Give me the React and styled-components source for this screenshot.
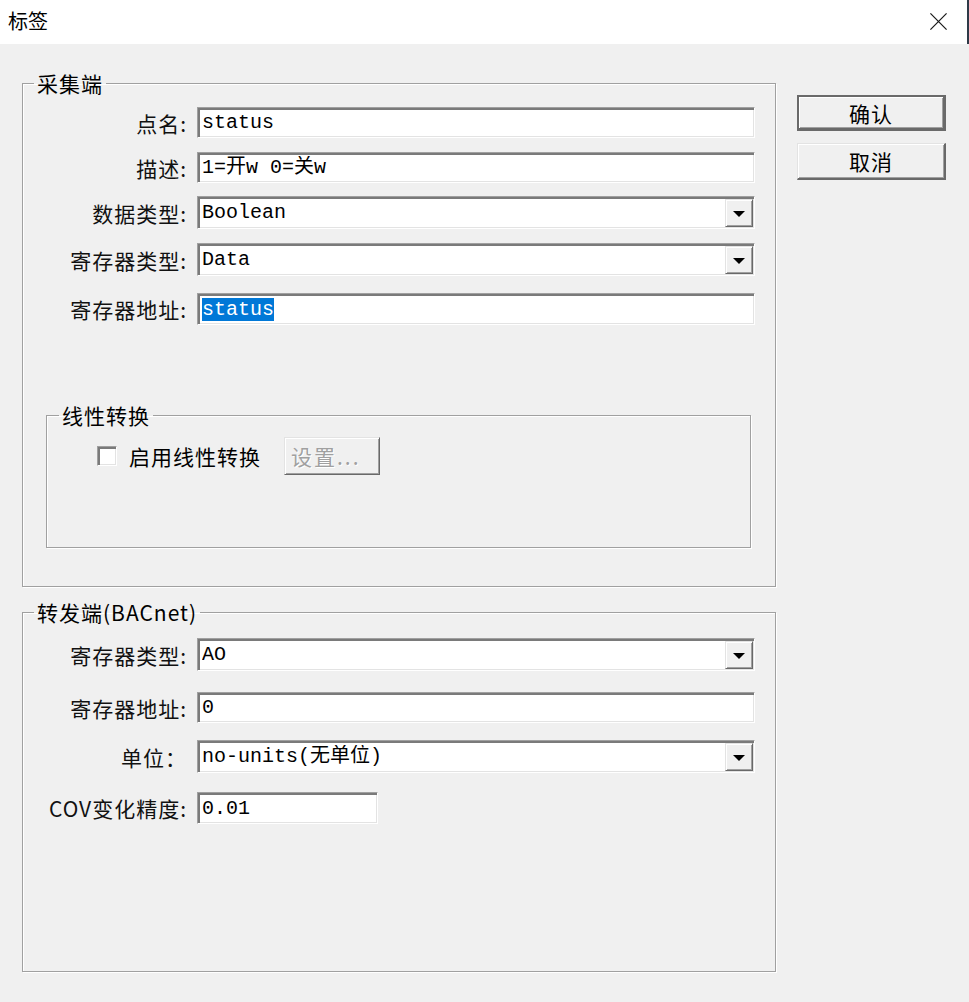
import React from 'react'
import styled, { createGlobalStyle } from 'styled-components'

const GlobalStyle = createGlobalStyle`
  html, body {
    margin: 0;
    padding: 0;
    background: #f0f0f0;
  }
  body {
    font-family: "Noto Sans CJK SC", sans-serif;
    color: #000;
  }
  * { box-sizing: border-box; }
`

const cjk = `"Noto Sans CJK SC", "Noto Sans", sans-serif`
const mono = `"Liberation Mono", "Noto Sans CJK SC", monospace`

export default function App() {
    return (
        <Window>
            <GlobalStyle />
            <TitleBar>
                <Title>标签</Title>
                <CloseIcon viewBox="0 0 20 20">
                    <path d="M1.5 1.5 L18.5 18.5 M18.5 1.5 L1.5 18.5" stroke="#1a1a1a" strokeWidth="1.3" fill="none" />
                </CloseIcon>
            </TitleBar>
            <Body>
                <LeftCol>
                    <GroupBox $mt={28}>
                        <Legend $ml={11}>采集端</Legend>
                        <GroupContent $pb={38}>
                            <Row $mt={13} $h={31}>
                                <Label>点名:</Label>
                                <Field><Value>status</Value></Field>
                            </Row>
                            <Row $mt={14} $h={31}>
                                <Label>描述:</Label>
                                <Field><Value>1=开w 0=关w</Value></Field>
                            </Row>
                            <Row $mt={13} $h={33}>
                                <Label>数据类型:</Label>
                                <Field><Value>Boolean</Value><DropButton><Arrow /></DropButton></Field>
                            </Row>
                            <Row $mt={14} $h={33}>
                                <Label>寄存器类型:</Label>
                                <Field><Value>Data</Value><DropButton><Arrow /></DropButton></Field>
                            </Row>
                            <Row $mt={17} $h={32}>
                                <Label>寄存器地址:</Label>
                                <Field><Value><Selected>status</Selected></Value></Field>
                            </Row>

                            <InnerGroup>
                                <Legend $ml={12}>线性转换</Legend>
                                <CheckRow>
                                    <CheckBox />
                                    <CheckText>启用线性转换</CheckText>
                                    <SetupButton>设置...</SetupButton>
                                </CheckRow>
                            </InnerGroup>
                        </GroupContent>
                    </GroupBox>

                    <GroupBox $mt={14}>
                        <Legend $ml={11}>转发端(BACnet)</Legend>
                        <GroupContent $pb={147}>
                            <Row $mt={15} $h={33}>
                                <Label>寄存器类型:</Label>
                                <Field><Value>AO</Value><DropButton><Arrow /></DropButton></Field>
                            </Row>
                            <Row $mt={21} $h={31}>
                                <Label>寄存器地址:</Label>
                                <Field><Value>0</Value></Field>
                            </Row>
                            <Row $mt={17} $h={33}>
                                <Label>单位：</Label>
                                <Field><Value>no-units(无单位)</Value><DropButton><Arrow /></DropButton></Field>
                            </Row>
                            <Row $mt={19} $h={32}>
                                <Label>COV变化精度:</Label>
                                <Field $w={181}><Value>0.01</Value></Field>
                            </Row>
                        </GroupContent>
                    </GroupBox>
                </LeftCol>

                <RightCol>
                    <DialogButton $default $h={36}>确认</DialogButton>
                    <DialogButton $h={37} $mt={12}>取消</DialogButton>
                </RightCol>
            </Body>
        </Window>
    )
}

const Window = styled.div`
    width: 969px;
    height: 1002px;
    display: flex;
    flex-direction: column;
    background: #f0f0f0;
    overflow: hidden;
`

const TitleBar = styled.div`
    height: 44px;
    flex: none;
    background: #fff;
    display: flex;
    align-items: center;
    justify-content: space-between;
    padding: 0 19px 0 8px;
    border-right: 2px solid #2e3a48;
`

const Title = styled.div`
    font-family: ${cjk};
    font-size: 20px;
    line-height: 24px;
    margin-top: -2px;
`

const CloseIcon = styled.svg`
    width: 19px;
    height: 19px;
    margin-top: -1px;
`

const Body = styled.div`
    flex: 1;
    display: flex;
    align-items: flex-start;
    padding-left: 22px;
    border-left: 1px solid #6a6a6a;
    margin-left: -1px;
`

const LeftCol = styled.div`
    width: 754px;
    display: flex;
    flex-direction: column;
`

const GroupBox = styled.fieldset`
    margin: ${p => p.$mt || 0}px 0 0 0;
    padding: 0;
    min-width: 0;
    border: 1px solid #a0a0a0;
    box-shadow: inset 1px 1px 0 #fff, 1px 1px 0 #fff;
`

const Legend = styled.legend`
    margin-left: ${p => p.$ml}px;
    padding: 0 3px;
    font-family: ${cjk};
    font-size: 21px;
    line-height: 22px;
    letter-spacing: 1px;
    color: #000;
`

const GroupContent = styled.div`
    padding: 0 20px ${p => p.$pb}px 0;
    display: flex;
    flex-direction: column;
`

const Row = styled.div`
    display: flex;
    align-items: center;
    margin-top: ${p => p.$mt}px;
    height: ${p => p.$h}px;
`

const Label = styled.div`
    width: 164px;
    flex: none;
    margin-right: 10px;
    text-align: right;
    font-family: ${cjk};
    font-size: 21px;
    line-height: 24px;
    letter-spacing: 1px;
    white-space: nowrap;
    color: #111;
`

const Field = styled.div`
    position: relative;
    height: 100%;
    ${p => (p.$w ? `width: ${p.$w}px; flex: none;` : 'flex: 1;')}
    background: #fff;
    border: 1px solid;
    border-color: #a0a0a0 #fff #fff #a0a0a0;
    box-shadow: inset 2px 2px 0 #7a7a7a, inset -1px -1px 0 #e3e3e3;
    display: flex;
    align-items: center;
    padding-left: 4px;
`

const Value = styled.div`
    flex: 1;
    font-family: ${mono};
    font-size: 20px;
    line-height: 24px;
    white-space: nowrap;
    overflow: hidden;
    margin-top: 1px;
`

const Selected = styled.span`
    background: #0078d7;
    color: #fff;
`

const DropButton = styled.div`
    width: 28px;
    height: calc(100% - 3px);
    margin: 2px 1px 1px 0;
    flex: none;
    background: #f0f0f0;
    border: 1px solid;
    border-color: #e3e3e3 #696969 #696969 #e3e3e3;
    box-shadow: inset 1px 1px 0 #fff, inset -1px -1px 0 #a0a0a0;
    display: flex;
    align-items: center;
    justify-content: center;
`

const Arrow = styled.div`
    width: 0;
    height: 0;
    margin-top: 2px;
    border-left: 6px solid transparent;
    border-right: 6px solid transparent;
    border-top: 6px solid #000;
`

const InnerGroup = styled.fieldset`
    margin: 79px 4px 0 23px;
    padding: 0 0 72px 0;
    min-width: 0;
    border: 1px solid #a0a0a0;
    box-shadow: inset 1px 1px 0 #fff, 1px 1px 0 #fff;
`

const CheckRow = styled.div`
    display: flex;
    align-items: center;
    margin-top: 11px;
    height: 38px;
    padding-left: 50px;
`

const CheckBox = styled.div`
    width: 20px;
    height: 20px;
    flex: none;
    background: #fff;
    border: 1px solid;
    border-color: #a0a0a0 #fff #fff #a0a0a0;
    box-shadow: inset 2px 2px 0 #7a7a7a, inset -1px -1px 0 #e3e3e3;
`

const CheckText = styled.div`
    margin-left: 12px;
    font-family: ${cjk};
    font-size: 21px;
    line-height: 24px;
    letter-spacing: 1px;
`

const SetupButton = styled.div`
    margin-left: 23px;
    width: 96px;
    height: 38px;
    background: #f0f0f0;
    border: 1px solid;
    border-color: #e3e3e3 #696969 #696969 #e3e3e3;
    box-shadow: inset 1px 1px 0 #fff, inset -1px -1px 0 #a0a0a0;
    display: flex;
    align-items: center;
    padding-left: 6px;
    font-family: ${cjk};
    font-size: 21px;
    letter-spacing: 2px;
    color: #a0a0a0;
    text-shadow: 1px 1px 0 #fff;
`

const RightCol = styled.div`
    margin-left: 21px;
    padding-top: 51px;
    display: flex;
    flex-direction: column;
    width: 149px;
`

const DialogButton = styled.div`
    height: ${p => p.$h}px;
    margin-top: ${p => p.$mt || 0}px;
    background: #f0f0f0;
    display: flex;
    align-items: center;
    justify-content: center;
    font-family: ${cjk};
    font-size: 21px;
    letter-spacing: 1px;
    ${p => (p.$default
        ? `border: 2px solid #6a6a6a;
           border-width: 2px 3px 3px 2px;
           box-shadow: inset 1px 1px 0 #fff, inset -1px -1px 0 #a0a0a0;`
        : `border: 1px solid;
           border-color: #e3e3e3 #696969 #696969 #e3e3e3;
           border-width: 1px 2px 2px 1px;
           box-shadow: inset 1px 1px 0 #fff, inset -1px -1px 0 #a0a0a0;`)}
`
